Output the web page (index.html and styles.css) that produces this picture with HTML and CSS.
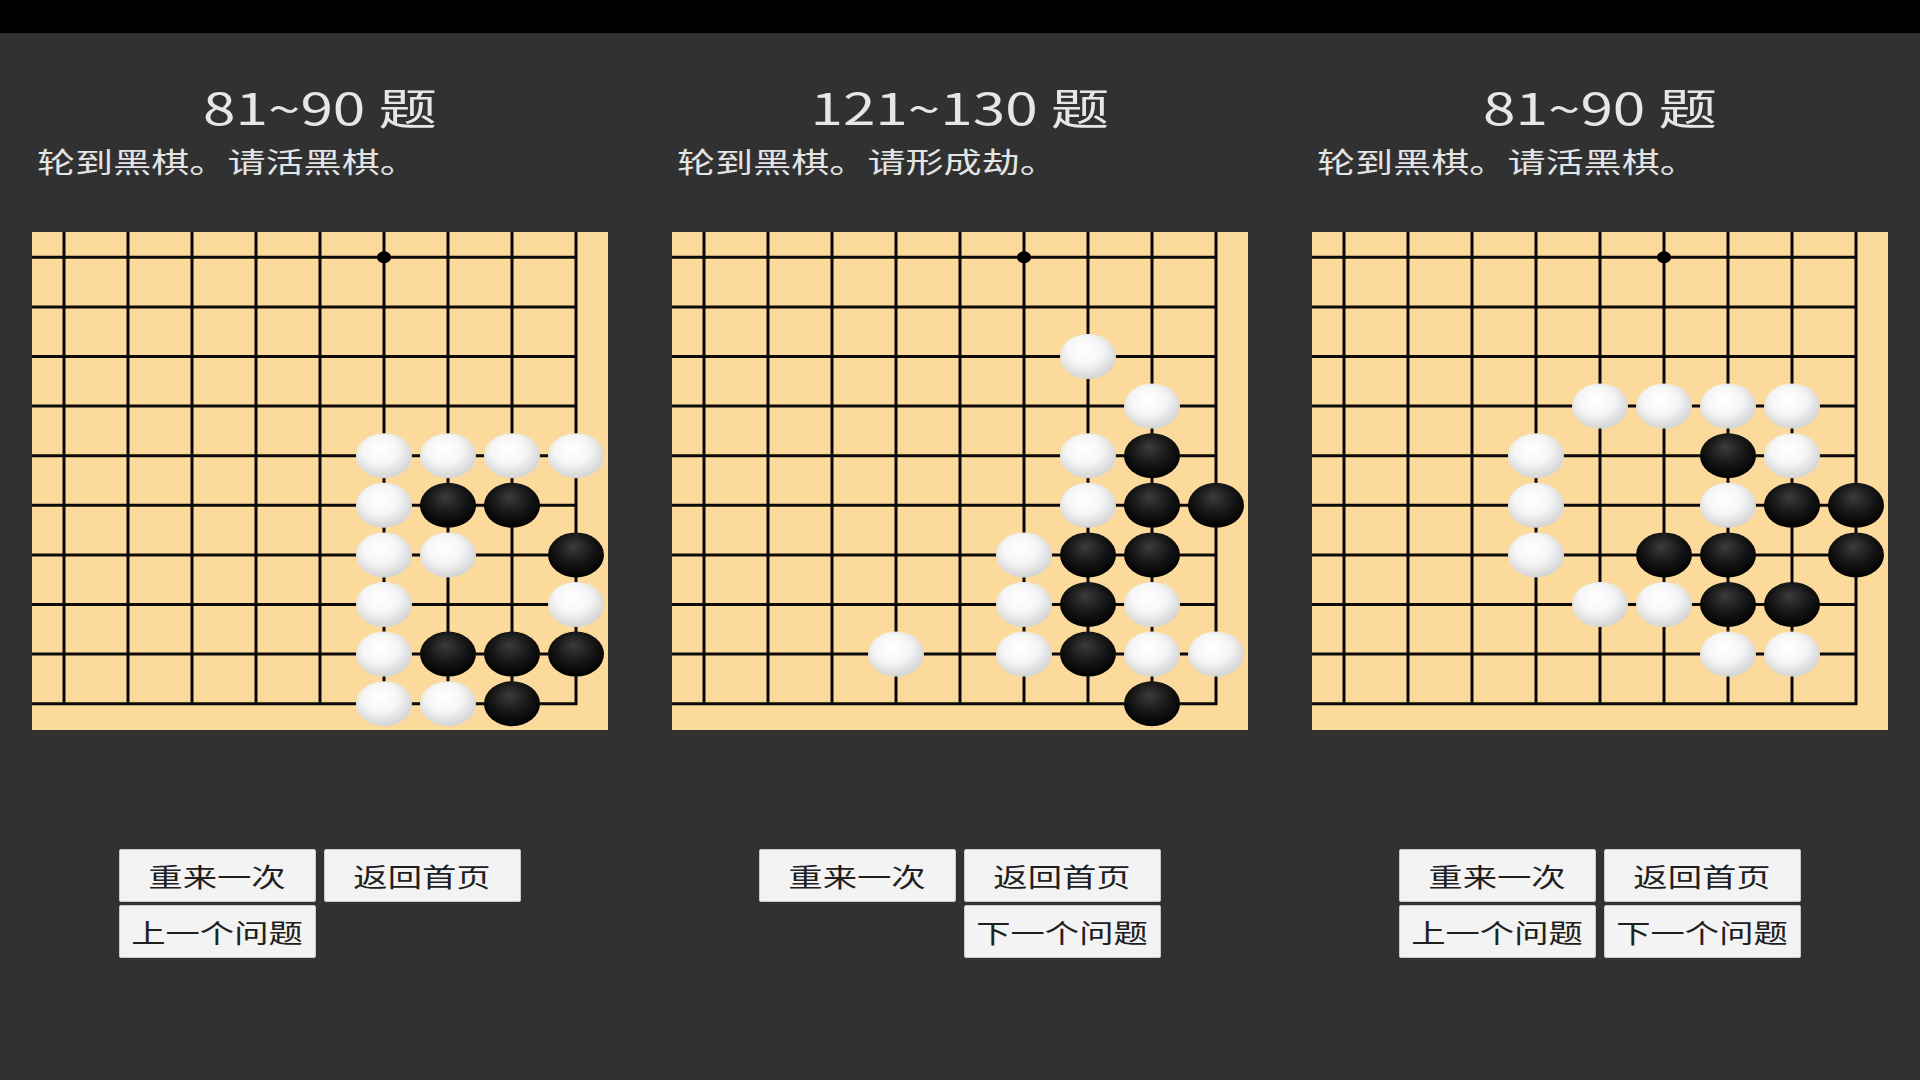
FILE: index.html
```html
<!DOCTYPE html>
<html lang="zh-CN">
<head>
<meta charset="utf-8">
<title>死活题</title>
<link rel="stylesheet" href="styles.css">
</head>
<body>
<div class="topbar"></div>
<main class="panels">
  <section class="panel">
    <h1 class="title"><span class="sx">81~90 题</span></h1>
    <p class="prompt"><span class="sx sx-left">轮到黑棋。请活黑棋。</span></p>
    <svg class="board" viewBox="0 0 576 498" width="576" height="498">
      <defs>
        <radialGradient id="gw" cx="0.45" cy="0.4" r="0.62" fx="0.42" fy="0.35">
          <stop offset="0" stop-color="#ffffff"/>
          <stop offset="0.5" stop-color="#f6f6f6"/>
          <stop offset="1" stop-color="#d2d2d2"/>
        </radialGradient>
        <radialGradient id="gb" cx="0.5" cy="0.4" r="0.62" fx="0.45" fy="0.3">
          <stop offset="0" stop-color="#3c3c3c"/>
          <stop offset="0.55" stop-color="#161616"/>
          <stop offset="1" stop-color="#000000"/>
        </radialGradient>
      </defs>
      <rect class="wood" x="0" y="0" width="576" height="498"/>
      <path class="grid" d="M32 0V471.7M96 0V471.7M160 0V471.7M224 0V471.7M288 0V471.7M352 0V471.7M416 0V471.7M480 0V471.7M544 0V473.2M0 25.3H544M0 74.9H544M0 124.5H544M0 174.1H544M0 223.7H544M0 273.3H544M0 322.9H544M0 372.5H544M0 422.1H544M0 471.7H545.5"/>
      <ellipse class="star" cx="352" cy="25.3" rx="7" ry="6"/>
      <g fill="url(#gw)">
        <ellipse cx="352" cy="223.7" rx="28" ry="22.5"/>
        <ellipse cx="416" cy="223.7" rx="28" ry="22.5"/>
        <ellipse cx="480" cy="223.7" rx="28" ry="22.5"/>
        <ellipse cx="544" cy="223.7" rx="28" ry="22.5"/>
        <ellipse cx="352" cy="273.3" rx="28" ry="22.5"/>
        <ellipse cx="352" cy="322.9" rx="28" ry="22.5"/>
        <ellipse cx="416" cy="322.9" rx="28" ry="22.5"/>
        <ellipse cx="352" cy="372.5" rx="28" ry="22.5"/>
        <ellipse cx="544" cy="372.5" rx="28" ry="22.5"/>
        <ellipse cx="352" cy="422.1" rx="28" ry="22.5"/>
        <ellipse cx="352" cy="471.7" rx="28" ry="22.5"/>
        <ellipse cx="416" cy="471.7" rx="28" ry="22.5"/>
      </g>
      <g fill="url(#gb)">
        <ellipse cx="416" cy="273.3" rx="28" ry="22.5"/>
        <ellipse cx="480" cy="273.3" rx="28" ry="22.5"/>
        <ellipse cx="544" cy="322.9" rx="28" ry="22.5"/>
        <ellipse cx="416" cy="422.1" rx="28" ry="22.5"/>
        <ellipse cx="480" cy="422.1" rx="28" ry="22.5"/>
        <ellipse cx="544" cy="422.1" rx="28" ry="22.5"/>
        <ellipse cx="480" cy="471.7" rx="28" ry="22.5"/>
      </g>
    </svg>
    <div class="buttons">
      <button class="btn" type="button"><span class="sx">重来一次</span></button>
      <button class="btn" type="button"><span class="sx">返回首页</span></button>
      <button class="btn" type="button"><span class="sx">上一个问题</span></button>
    </div>
  </section>

  <section class="panel">
    <h1 class="title"><span class="sx">121~130 题</span></h1>
    <p class="prompt"><span class="sx sx-left">轮到黑棋。请形成劫。</span></p>
    <svg class="board" viewBox="0 0 576 498" width="576" height="498">
      <rect class="wood" x="0" y="0" width="576" height="498"/>
      <path class="grid" d="M32 0V471.7M96 0V471.7M160 0V471.7M224 0V471.7M288 0V471.7M352 0V471.7M416 0V471.7M480 0V471.7M544 0V473.2M0 25.3H544M0 74.9H544M0 124.5H544M0 174.1H544M0 223.7H544M0 273.3H544M0 322.9H544M0 372.5H544M0 422.1H544M0 471.7H545.5"/>
      <ellipse class="star" cx="352" cy="25.3" rx="7" ry="6"/>
      <g fill="url(#gw)">
        <ellipse cx="416" cy="124.5" rx="28" ry="22.5"/>
        <ellipse cx="480" cy="174.1" rx="28" ry="22.5"/>
        <ellipse cx="416" cy="223.7" rx="28" ry="22.5"/>
        <ellipse cx="416" cy="273.3" rx="28" ry="22.5"/>
        <ellipse cx="352" cy="322.9" rx="28" ry="22.5"/>
        <ellipse cx="352" cy="372.5" rx="28" ry="22.5"/>
        <ellipse cx="480" cy="372.5" rx="28" ry="22.5"/>
        <ellipse cx="224" cy="422.1" rx="28" ry="22.5"/>
        <ellipse cx="352" cy="422.1" rx="28" ry="22.5"/>
        <ellipse cx="480" cy="422.1" rx="28" ry="22.5"/>
        <ellipse cx="544" cy="422.1" rx="28" ry="22.5"/>
      </g>
      <g fill="url(#gb)">
        <ellipse cx="480" cy="223.7" rx="28" ry="22.5"/>
        <ellipse cx="480" cy="273.3" rx="28" ry="22.5"/>
        <ellipse cx="544" cy="273.3" rx="28" ry="22.5"/>
        <ellipse cx="416" cy="322.9" rx="28" ry="22.5"/>
        <ellipse cx="480" cy="322.9" rx="28" ry="22.5"/>
        <ellipse cx="416" cy="372.5" rx="28" ry="22.5"/>
        <ellipse cx="416" cy="422.1" rx="28" ry="22.5"/>
        <ellipse cx="480" cy="471.7" rx="28" ry="22.5"/>
      </g>
    </svg>
    <div class="buttons">
      <button class="btn" type="button"><span class="sx">重来一次</span></button>
      <button class="btn" type="button"><span class="sx">返回首页</span></button>
      <span class="btn-gap"></span>
      <button class="btn" type="button"><span class="sx">下一个问题</span></button>
    </div>
  </section>

  <section class="panel">
    <h1 class="title"><span class="sx">81~90 题</span></h1>
    <p class="prompt"><span class="sx sx-left">轮到黑棋。请活黑棋。</span></p>
    <svg class="board" viewBox="0 0 576 498" width="576" height="498">
      <rect class="wood" x="0" y="0" width="576" height="498"/>
      <path class="grid" d="M32 0V471.7M96 0V471.7M160 0V471.7M224 0V471.7M288 0V471.7M352 0V471.7M416 0V471.7M480 0V471.7M544 0V473.2M0 25.3H544M0 74.9H544M0 124.5H544M0 174.1H544M0 223.7H544M0 273.3H544M0 322.9H544M0 372.5H544M0 422.1H544M0 471.7H545.5"/>
      <ellipse class="star" cx="352" cy="25.3" rx="7" ry="6"/>
      <g fill="url(#gw)">
        <ellipse cx="288" cy="174.1" rx="28" ry="22.5"/>
        <ellipse cx="352" cy="174.1" rx="28" ry="22.5"/>
        <ellipse cx="416" cy="174.1" rx="28" ry="22.5"/>
        <ellipse cx="480" cy="174.1" rx="28" ry="22.5"/>
        <ellipse cx="224" cy="223.7" rx="28" ry="22.5"/>
        <ellipse cx="480" cy="223.7" rx="28" ry="22.5"/>
        <ellipse cx="224" cy="273.3" rx="28" ry="22.5"/>
        <ellipse cx="416" cy="273.3" rx="28" ry="22.5"/>
        <ellipse cx="224" cy="322.9" rx="28" ry="22.5"/>
        <ellipse cx="288" cy="372.5" rx="28" ry="22.5"/>
        <ellipse cx="352" cy="372.5" rx="28" ry="22.5"/>
        <ellipse cx="416" cy="422.1" rx="28" ry="22.5"/>
        <ellipse cx="480" cy="422.1" rx="28" ry="22.5"/>
      </g>
      <g fill="url(#gb)">
        <ellipse cx="416" cy="223.7" rx="28" ry="22.5"/>
        <ellipse cx="480" cy="273.3" rx="28" ry="22.5"/>
        <ellipse cx="544" cy="273.3" rx="28" ry="22.5"/>
        <ellipse cx="352" cy="322.9" rx="28" ry="22.5"/>
        <ellipse cx="416" cy="322.9" rx="28" ry="22.5"/>
        <ellipse cx="544" cy="322.9" rx="28" ry="22.5"/>
        <ellipse cx="416" cy="372.5" rx="28" ry="22.5"/>
        <ellipse cx="480" cy="372.5" rx="28" ry="22.5"/>
      </g>
    </svg>
    <div class="buttons">
      <button class="btn" type="button"><span class="sx">重来一次</span></button>
      <button class="btn" type="button"><span class="sx">返回首页</span></button>
      <button class="btn" type="button"><span class="sx">上一个问题</span></button>
      <button class="btn" type="button"><span class="sx">下一个问题</span></button>
    </div>
  </section>
</main>
</body>
</html>
```

FILE: styles.css
```css
html, body {
  margin: 0;
  padding: 0;
  width: 1920px;
  height: 1080px;
  overflow: hidden;
  background: #313131;
  font-family: "Noto Sans CJK SC", "Noto Sans", sans-serif;
}

.topbar {
  height: 33px;
  background: #000;
}

.panels {
  display: grid;
  grid-template-columns: repeat(3, 640px);
}

.panel {
  display: flex;
  flex-direction: column;
  padding: 48px 32px 0;
}

.sx {
  display: inline-block;
  transform: scaleX(1.32);
  transform-origin: 50% 50%;
  white-space: nowrap;
}

.title .sx {
  transform: scaleX(1.36);
}

.sx-left {
  transform: scaleX(1.36);
  transform-origin: 0 50%;
}

.title {
  margin: 0;
  font-size: 43px;
  line-height: 50px;
  font-weight: 400;
  color: #e6e6e6;
  text-align: center;
}

.prompt {
  margin: 12px 0 0;
  padding-left: 5px;
  font-size: 28px;
  line-height: 36px;
  color: #e4e4e4;
}

.board {
  display: block;
  margin-top: 53px;
}

.wood {
  fill: #fcda9c;
}

.grid {
  fill: none;
  stroke: #0a0a0a;
  stroke-width: 3;
}

.star {
  fill: #000;
}

.buttons {
  display: grid;
  grid-template-columns: 197px 197px;
  grid-auto-rows: 53px;
  gap: 3px 8px;
  justify-content: center;
  margin-top: 119px;
}

.btn {
  display: flex;
  align-items: center;
  justify-content: center;
  margin: 0;
  padding: 0;
  background: #f3f3f3;
  border: 1px solid #c9c9c9;
  border-radius: 2px;
  font-family: "Noto Sans CJK SC", "Noto Sans", sans-serif;
  font-size: 26px;
  line-height: 1;
  color: #202020;
}
```
